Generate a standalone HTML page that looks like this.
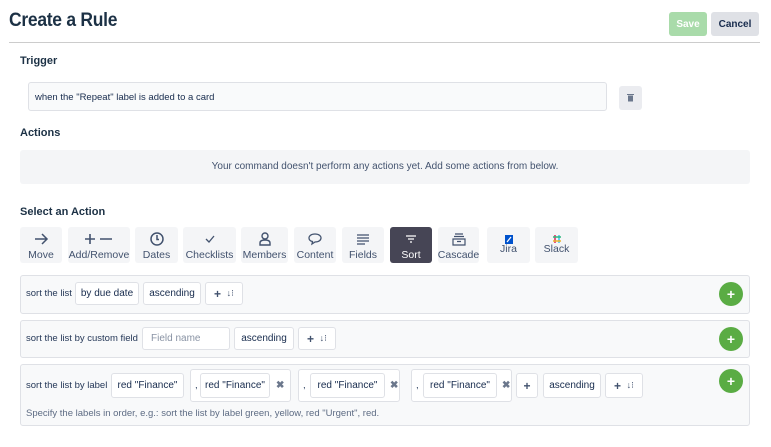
<!DOCTYPE html>
<html><head><meta charset="utf-8"><style>
*{box-sizing:border-box;margin:0;padding:0}
body{width:771px;height:447px;background:#fff;font-family:"Liberation Sans",sans-serif;color:#172b4d;position:relative;overflow:hidden}
.a{position:absolute}
h1{position:absolute;left:9px;top:10px;font-size:19px;font-weight:bold;color:#1c3145;letter-spacing:-0.3px;transform:scaleX(0.92);transform-origin:left}
.lbl{position:absolute;left:20px;font-size:11px;font-weight:bold;color:#1c3145}
.btn{position:absolute;border-radius:3px;font-size:10px;font-weight:bold;display:flex;align-items:center;justify-content:center}
.act{position:absolute;top:227px;height:36px;background:#f4f5f7;border-radius:3px;font-size:10.5px;color:#42526e;text-align:center;white-space:nowrap}
.act svg{position:absolute;left:50%;transform:translateX(-50%);top:4px}
.act span{position:absolute;left:-4px;right:-4px;bottom:2px}
.row{position:absolute;left:20px;width:730px;background:#f8f9fa;border:1px solid #dfe1e6;border-radius:3px}
.t{position:absolute;font-size:9.5px;color:#253858;white-space:nowrap}
.box{position:absolute;background:#fff;border:1px solid #dfe1e6;border-radius:3px;font-size:10px;color:#172b4d;display:flex;align-items:center;justify-content:center;white-space:nowrap}
.plus{position:absolute;width:24px;height:24px;border-radius:50%;background:#5aac44;color:#fff;font-weight:bold;font-size:14px;display:flex;align-items:center;justify-content:center;line-height:1}
.x{position:absolute;font-size:10px;color:#6b778c;font-weight:bold}
</style></head><body>
<h1>Create a Rule</h1>
<div class="btn" style="left:669px;top:12px;width:38px;height:24px;background:#a9dbaa;color:#fff">Save</div>
<div class="btn" style="left:711px;top:12px;width:48px;height:24px;background:#dfe1e6;color:#172b4d">Cancel</div>
<div class="a" style="left:9px;top:42px;width:751px;height:1px;background:#ccc"></div>
<div class="lbl" style="top:55px">Trigger</div>
<div class="a" style="left:28px;top:82px;width:579px;height:29px;background:#f9fafb;border:1px solid #dfe1e6;border-radius:3px;font-size:9.5px;padding:9px 0 0 6px">when the "Repeat" label is added to a card</div>
<div class="a" style="left:619px;top:86px;width:23px;height:24px;background:#ebecf0;border-radius:3px"><svg width="23" height="24"><rect x="9" y="9.5" width="5" height="6" fill="#6b778c"/><rect x="8" y="8" width="7" height="1" fill="#6b778c"/></svg></div>
<div class="lbl" style="top:127px">Actions</div>
<div class="a" style="left:20px;top:150px;width:730px;height:34px;background:#f4f5f7;border-radius:3px;font-size:10px;color:#42526e;text-align:center;line-height:34px">Your command doesn't perform any actions yet. Add some actions from below.</div>
<div class="lbl" style="top:206px">Select an Action</div>

<div class="act" style="left:20px;width:42px"><svg width="16" height="16"><path d="M2 8H14M9 3L14 8L9 13" stroke="#42526e" stroke-width="1.5" fill="none"/></svg><span>Move</span></div>
<div class="act" style="left:68px;width:62px"><svg width="32" height="16"><path d="M2 8H12M7 3V13M17 8H29" stroke="#42526e" stroke-width="1.6" fill="none"/></svg><span>Add/Remove</span></div>
<div class="act" style="left:135px;width:43px"><svg width="16" height="16"><circle cx="8" cy="8" r="6" stroke="#42526e" stroke-width="1.5" fill="none"/><path d="M8 4V8.5H10" stroke="#42526e" stroke-width="1.5" fill="none"/></svg><span>Dates</span></div>
<div class="act" style="left:183px;width:53px"><svg width="16" height="16"><path d="M4 8L7 11L12 5" stroke="#42526e" stroke-width="1.3" fill="none"/></svg><span>Checklists</span></div>
<div class="act" style="left:241px;width:47px"><svg width="16" height="16"><circle cx="8" cy="5" r="3" stroke="#42526e" stroke-width="1.4" fill="none"/><path d="M3 14V12Q3 9 8 9Q13 9 13 12V14Z" stroke="#42526e" stroke-width="1.4" fill="none"/></svg><span>Members</span></div>
<div class="act" style="left:294px;width:42px"><svg width="16" height="16"><path d="M8 3C12 3 14 5 14 7C14 9 12 11 8 11L5 13L5.5 10.5C3 10 2 8.5 2 7C2 5 4 3 8 3Z" stroke="#42526e" stroke-width="1.3" fill="none"/></svg><span>Content</span></div>
<div class="act" style="left:342px;width:42px"><svg width="16" height="16"><path d="M2 4H14M2 7H14M2 10H14M2 13H10" stroke="#42526e" stroke-width="1.3"/></svg><span>Fields</span></div>
<div class="act" style="left:390px;width:42px;background:#464555;color:#fff"><svg width="16" height="16"><path d="M3 5H13M5 8H11M7 11H9" stroke="#fff" stroke-width="1.3"/></svg><span>Sort</span></div>
<div class="act" style="left:438px;width:41px"><svg width="16" height="16"><path d="M4 3H12M3 5.5H13M2 8H14V14H2Z M6 10.5H10" stroke="#42526e" stroke-width="1.2" fill="none"/></svg><span>Cascade</span></div>
<div class="act" style="left:487px;width:43px"><svg width="16" height="16"><rect x="4" y="4" width="8" height="9" fill="#0052cc"/><path d="M6 11L10 6" stroke="#fff" stroke-width="1.2"/></svg><span style="bottom:8px">Jira</span></div>
<div class="act" style="left:535px;width:43px"><svg width="16" height="16"><path d="M6 4V12" stroke="#e01e5a" stroke-width="1.5"/><path d="M10 4V12" stroke="#36c5f0" stroke-width="1.5"/><path d="M4 6H12" stroke="#2eb67d" stroke-width="1.5"/><path d="M4 10H12" stroke="#ecb22e" stroke-width="1.5"/></svg><span style="bottom:8px">Slack</span></div>

<div class="row" style="top:275px;height:39px"></div>
<div class="t" style="left:26px;top:288px">sort the list</div>
<div class="box" style="left:75px;top:282px;width:64px;height:23px">by due date</div>
<div class="box" style="left:143px;top:282px;width:58px;height:23px">ascending</div>
<div class="box" style="left:205px;top:282px;width:38px;height:23px;color:#42526e"><b style="font-size:12px">+</b>&nbsp;&nbsp;<span style="font-size:9px">↓⁝</span></div>
<div class="plus" style="left:719px;top:282px">+</div>

<div class="row" style="top:320px;height:38px"></div>
<div class="t" style="left:26px;top:333px">sort the list by custom field</div>
<div class="box" style="left:142px;top:327px;width:88px;height:23px;justify-content:flex-start;padding-left:8px;color:#8993a4">Field name</div>
<div class="box" style="left:234px;top:327px;width:60px;height:23px">ascending</div>
<div class="box" style="left:298px;top:327px;width:38px;height:23px;color:#42526e"><b style="font-size:12px">+</b>&nbsp;&nbsp;<span style="font-size:9px">↓⁝</span></div>
<div class="plus" style="left:719px;top:327px">+</div>

<div class="row" style="top:364px;height:62px"></div>
<div class="t" style="left:26px;top:380px">sort the list by label</div>
<div class="box" style="left:111px;top:373px;width:73px;height:25px">red "Finance"</div>
<div class="box" style="left:190px;top:369px;width:101px;height:33px;justify-content:flex-start"></div>
<div class="t" style="left:195px;top:380px">,</div>
<div class="box" style="left:200px;top:373px;width:70px;height:25px">red "Finance"</div>
<div class="x" style="left:276px;top:380px">✖</div>
<div class="box" style="left:298px;top:369px;width:102px;height:33px"></div>
<div class="t" style="left:303px;top:380px">,</div>
<div class="box" style="left:310px;top:373px;width:75px;height:25px">red "Finance"</div>
<div class="x" style="left:390px;top:380px">✖</div>
<div class="box" style="left:411px;top:369px;width:101px;height:33px"></div>
<div class="t" style="left:416px;top:380px">,</div>
<div class="box" style="left:423px;top:373px;width:74px;height:25px">red "Finance"</div>
<div class="x" style="left:502px;top:380px">✖</div>
<div class="box" style="left:516px;top:373px;width:22px;height:25px;color:#42526e"><b style="font-size:12px">+</b></div>
<div class="box" style="left:543px;top:373px;width:58px;height:25px">ascending</div>
<div class="box" style="left:605px;top:373px;width:38px;height:25px;color:#42526e"><b style="font-size:12px">+</b>&nbsp;&nbsp;<span style="font-size:9px">↓⁝</span></div>
<div class="plus" style="left:719px;top:369px">+</div>
<div class="t" style="left:26px;top:408px;color:#5e6c84">Specify the labels in order, e.g.: sort the list by label green, yellow, red "Urgent", red.</div>
</body></html>
